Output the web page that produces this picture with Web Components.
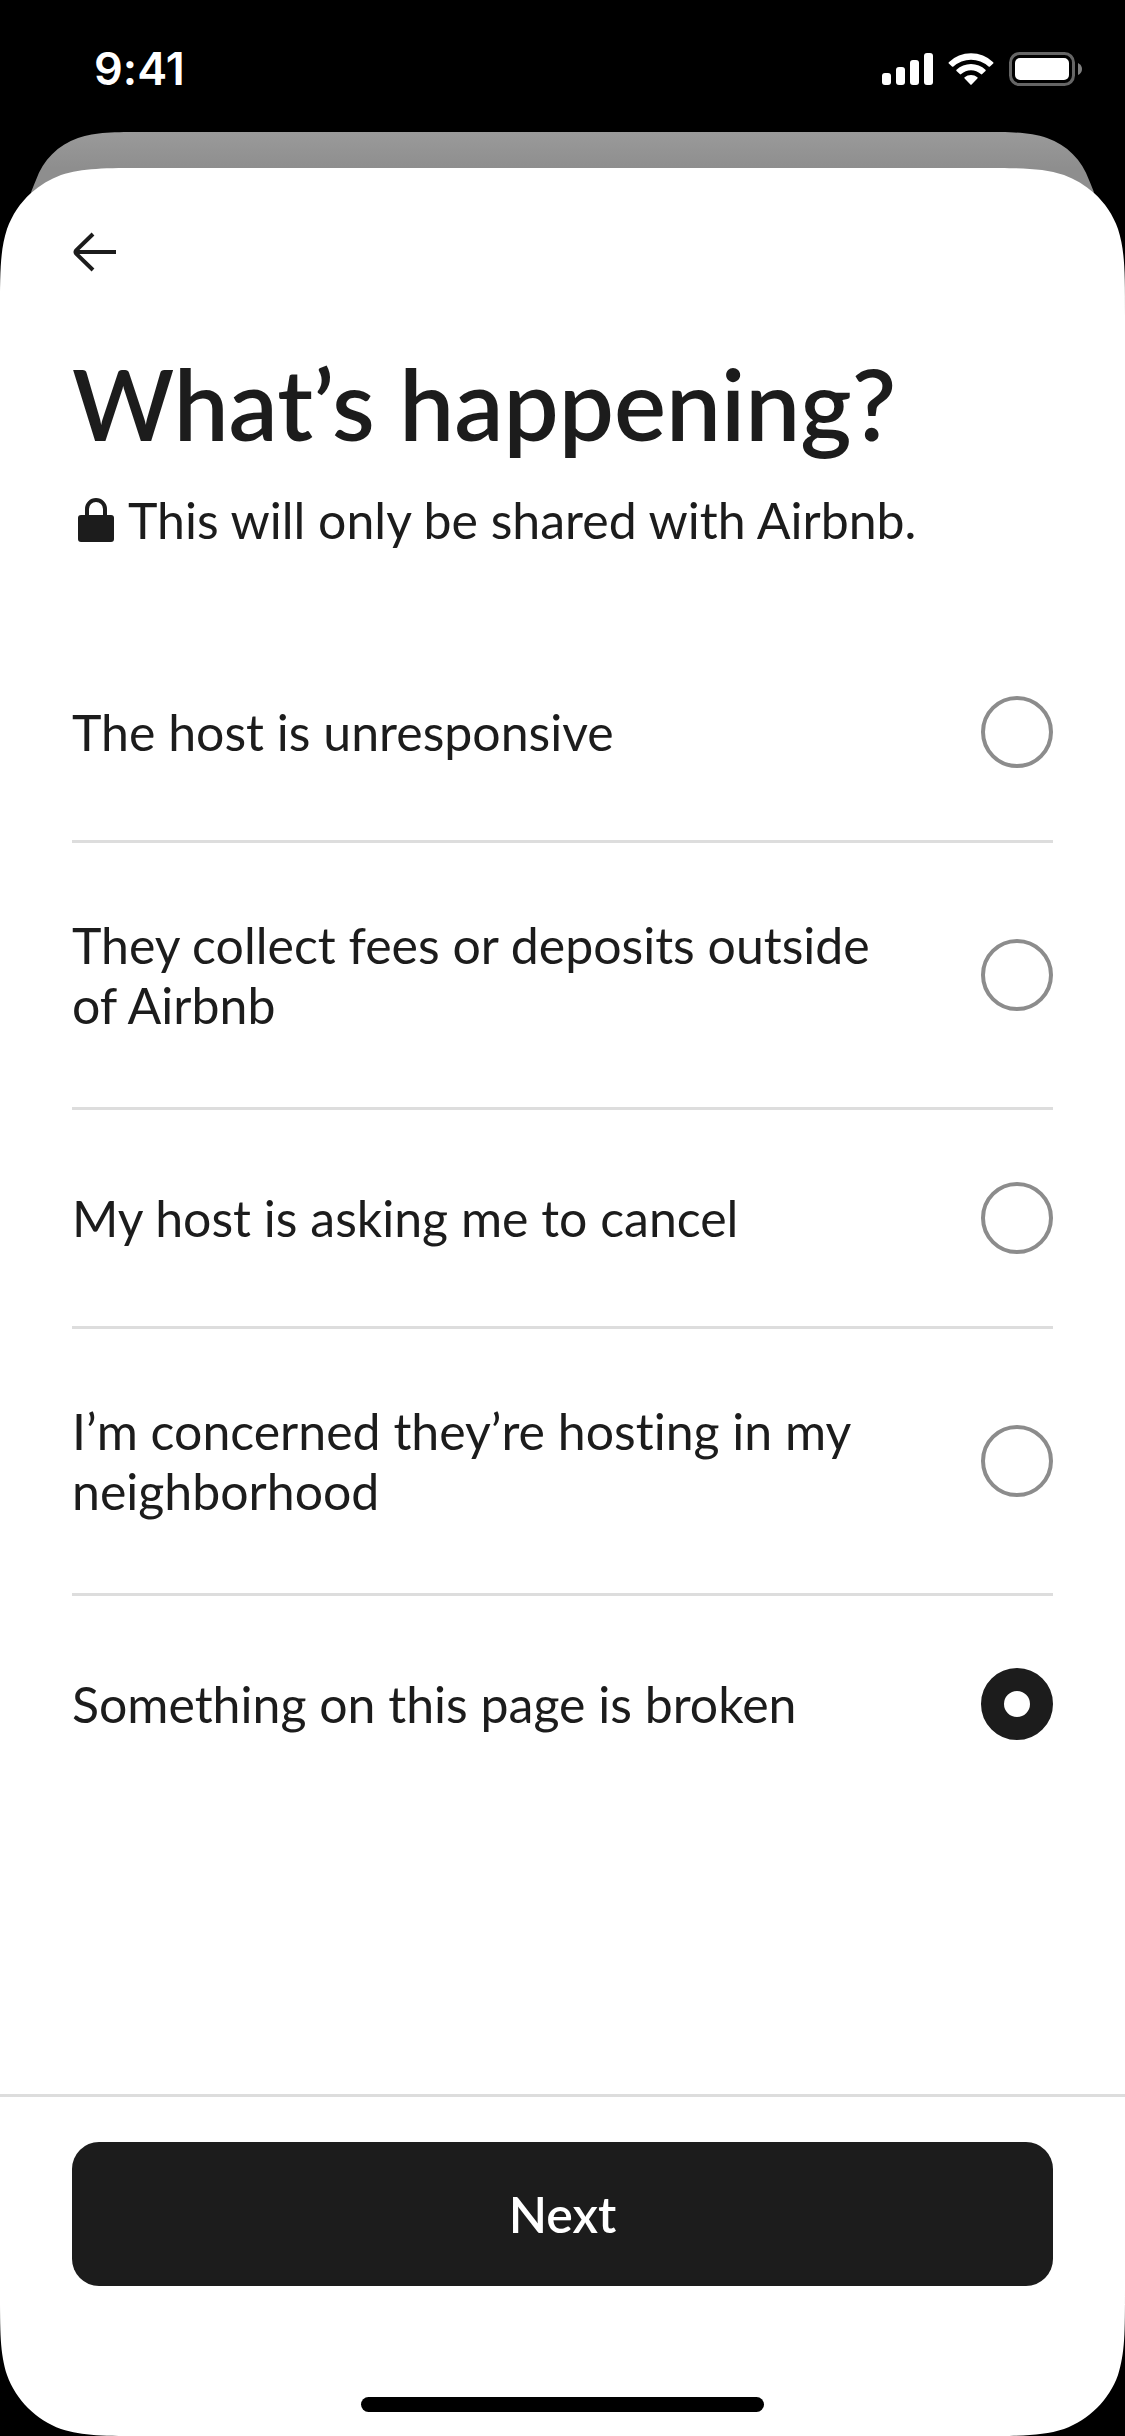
<!DOCTYPE html>
<html lang="en">
<head>
<meta charset="utf-8">
<meta name="viewport" content="width=device-width, initial-scale=1">
<title>What’s happening?</title>
<style>
	body {
		background: #000;
		color: #1c1c1c;
		font-family: Lato, "Liberation Sans", sans-serif;
		font-size: 50px;
		font-variant-ligatures: none;
		line-height: 60px;
		margin: 0;
	}
</style>
</head>
<body>

<report-page>
	<status-bar slot="status">9:41</status-bar>
	<page-header>
		<span slot="title">What’s happening?</span>
		<span slot="note">This will only be shared with Airbnb.</span>
	</page-header>
	<reason-list label="What’s happening?">
		<reason-option value="unresponsive">The host is unresponsive</reason-option>
		<reason-option value="fees">They collect fees or deposits outside of Airbnb</reason-option>
		<reason-option value="cancel">My host is asking me to cancel</reason-option>
		<reason-option value="neighborhood">I’m concerned they’re hosting in my neighborhood</reason-option>
		<reason-option value="broken" checked>Something on this page is broken</reason-option>
	</reason-list>
	<page-footer slot="footer">Next</page-footer>
</report-page>

<script>
// Screen layout: status bar, card peeking out behind, then the sheet
class ReportPage extends HTMLElement {
	constructor() {
		super();
		this.attachShadow({mode: 'open'});
		this.shadowRoot.innerHTML = `
			<style>
				:host {
					display: flex;
					flex-direction: column;
					min-height: 100vh;
				}

				.stack {
					display: flex;
					flex: 1;
					flex-direction: column;
					position: relative;
				}

				.behind {
					background: linear-gradient(#9a9a9a, #8e8e8e);
					height: 36px;
				}

				.sheet {
					background: #fff;
					display: flex;
					flex: 1;
					flex-direction: column;
				}

				main {
					flex: 1;
					padding: 60px 72px 72px;
				}

				/* smooth corners laid over the sheet */
				.corner {
					display: block;
					pointer-events: none;
					position: absolute;
				}

				.top {
					top: 0;
				}

				.bottom {
					bottom: 0;
				}

				.left {
					left: 0;
				}

				.right {
					right: 0;
					transform: scaleX(-1);
				}
			</style>
			<slot name="status"></slot>
			<div class="stack">
				<div class="behind"></div>
				<div class="sheet">
					<main><slot></slot></main>
					<slot name="footer"></slot>
				</div>
				${this.topCorner('left')}
				${this.topCorner('right')}
				${this.bottomCorner('left')}
				${this.bottomCorner('right')}
			</div>
		`;
	}

	// grey: the card behind, down to the sheet's curve; black: outside both
	topCorner(side) {
		return `
			<svg class="corner top ${side}" width="148" height="184" viewBox="0 0 148 184" aria-hidden="true">
				<path d="M147 36C104 36 83 36 61 43C50 47 40 53 31 61L34 36Z" fill="#8e8e8e"/>
				<path d="M0 0H146C113 0 96 0 78 6C58 13 43 28 36 48C34 53 32 57 31 61C20 71 12 83 7 97C0 119 0 140 0 183Z"/>
			</svg>
		`;
	}

	bottomCorner(side) {
		return `
			<svg class="corner bottom ${side}" width="148" height="148" viewBox="0 0 148 148" aria-hidden="true">
				<path d="M0 1C0 44 0 65 7 87C16 112 36 132 61 141C83 148 104 148 147 148H0Z"/>
			</svg>
		`;
	}
}

class StatusBar extends HTMLElement {
	constructor() {
		super();
		this.attachShadow({mode: 'open'});
		this.shadowRoot.innerHTML = `
			<style>
				:host {
					align-items: center;
					box-sizing: border-box;
					color: #fff;
					display: flex;
					font-family: Inter, "Liberation Sans", sans-serif;
					font-size: 45px;
					font-weight: 600;
					height: 132px;
					justify-content: space-between;
					padding: 6px 43px 0 94px;
				}

				svg {
					display: block;
				}
			</style>
			<time><slot></slot></time>
			<svg width="200" height="34" viewBox="0 0 200 34" fill="#fff" role="img" aria-label="Signal, Wi-Fi, battery">
				<rect x="0" y="21" width="9" height="12" rx="3"/>
				<rect x="14" y="15" width="9" height="18" rx="3"/>
				<rect x="28" y="8" width="9" height="25" rx="3"/>
				<rect x="42" y="1" width="9" height="32" rx="3"/>
				<path d="M66.800 10.200A32 32 0 0 1 111.200 10.200Q111.800 11 111.200 11.600L108 14.600Q107.300 15.100 106.600 14.500A26 26 0 0 0 71.400 14.500Q70.700 15.100 70 14.600L66.800 11.600Q66.200 11 66.800 10.200Z"/>
				<path d="M74.500 17.700A21 21 0 0 1 103.500 17.700Q104.100 18.300 103.500 18.900L100.200 22.100Q99.500 22.700 98.800 22.100A14.500 14.500 0 0 0 79.200 22.100Q78.500 22.700 77.800 22.100L74.500 18.900Q73.900 18.300 74.500 17.700Z"/>
				<path d="M82.600 25.300A10 10 0 0 1 95.400 25.300Q96 25.900 95.400 26.500L89.600 32.600Q89 33.200 88.400 32.600L82.600 26.500Q82 25.900 82.600 25.300Z"/>
				<rect x="128.500" y="1.500" width="63" height="31" rx="9" fill="none" stroke="#666" stroke-width="3"/>
				<rect x="133" y="6" width="54" height="22" rx="5"/>
				<path d="M196 11Q200 13 200 17T196 23Z" fill="#808080"/>
			</svg>
		`;
	}
}

class PageHeader extends HTMLElement {
	constructor() {
		super();
		this.attachShadow({mode: 'open'});
		this.shadowRoot.innerHTML = `
			<style>
				:host {
					display: block;
				}

				button {
					background: none;
					border: 0;
					color: inherit;
					cursor: pointer;
					display: block;
					height: 48px;
					padding: 0;
					width: 48px;
				}

				svg {
					display: block;
					flex: none;
				}

				h1 {
					font-size: 98px;
					font-weight: 600;
					line-height: 110px;
					margin: 72px 0 32px;
				}

				p {
					align-items: center;
					display: flex;
					gap: 8px;
					margin: 0;
				}
			</style>
			<button type="button" aria-label="Back">
				<svg width="48" height="48" viewBox="0 0 48 48" fill="none" stroke="currentColor" stroke-width="4" aria-hidden="true">
					<path d="M44 24H4"/>
					<path d="M21 6L4 22.500Q3 24 4 25.500L21 42"/>
				</svg>
			</button>
			<h1><slot name="title"></slot></h1>
			<p>
				<svg width="48" height="48" viewBox="0 0 48 48" aria-hidden="true">
					<rect x="6" y="19" width="36" height="27" rx="3" fill="currentColor"/>
					<path d="M15 20V13A9 9 0 0 1 33 13V20" fill="none" stroke="currentColor" stroke-width="4"/>
				</svg>
				<slot name="note"></slot>
			</p>
		`;
	}
}

class ReasonList extends HTMLElement {
	constructor() {
		super();
		this.attachShadow({mode: 'open'});
		this.shadowRoot.innerHTML = `
			<style>
				:host {
					display: block;
					margin-top: 74px;
				}

				::slotted(:not(:last-child)) {
					border-bottom: 3px solid #ddd;
				}
			</style>
			<slot></slot>
		`;
		// each radio lives in its own shadow root, so the group is kept here
		this.addEventListener('pick', (e) => {
			for (const option of this.children) {
				option.checked = option === e.target;
			}
		});
	}

	connectedCallback() {
		this.setAttribute('role', 'radiogroup');
		this.setAttribute('aria-label', this.getAttribute('label'));
	}
}

class ReasonOption extends HTMLElement {
	constructor() {
		super();
		this.attachShadow({mode: 'open'});
		this.shadowRoot.innerHTML = `
			<style>
				:host {
					display: block;
				}

				label {
					align-items: center;
					cursor: pointer;
					display: flex;
					gap: 72px;
					justify-content: space-between;
					min-height: 72px;
					padding: 72px 0;
				}

				input {
					appearance: none;
					background: #fff;
					border: 4px solid #8c8c8c;
					border-radius: 50%;
					box-sizing: border-box;
					flex: none;
					height: 72px;
					margin: 0;
					width: 72px;
				}

				input:checked {
					border: 23px solid #1c1c1c;
				}
			</style>
			<label for="radio">
				<span><slot></slot></span>
				<input type="radio" id="radio">
			</label>
		`;
		this.input = this.shadowRoot.querySelector('input');
		this.input.addEventListener('change', () => {
			this.dispatchEvent(new Event('pick', {bubbles: true}));
		});
	}

	connectedCallback() {
		this.input.value = this.getAttribute('value');
		this.checked = this.hasAttribute('checked');
	}

	set checked(value) {
		this.input.checked = value;
	}
}

class PageFooter extends HTMLElement {
	constructor() {
		super();
		this.attachShadow({mode: 'open'});
		this.shadowRoot.innerHTML = `
			<style>
				:host {
					border-top: 3px solid #ddd;
					display: block;
					padding: 45px 72px 24px;
				}

				button {
					background: #1c1c1c;
					border: 0;
					border-radius: 27px;
					color: #fff;
					cursor: pointer;
					display: block;
					font: inherit;
					font-weight: 600;
					height: 144px;
					padding: 0;
					width: 100%;
				}

				.home {
					background: #000;
					border-radius: 8px;
					height: 15px;
					margin: 111px auto 0;
					width: 41%;
				}
			</style>
			<button type="button"><slot></slot></button>
			<div class="home"></div>
		`;
	}
}

customElements.define('report-page', ReportPage);
customElements.define('status-bar', StatusBar);
customElements.define('page-header', PageHeader);
customElements.define('reason-list', ReasonList);
customElements.define('reason-option', ReasonOption);
customElements.define('page-footer', PageFooter);
</script>
</body>
</html>
